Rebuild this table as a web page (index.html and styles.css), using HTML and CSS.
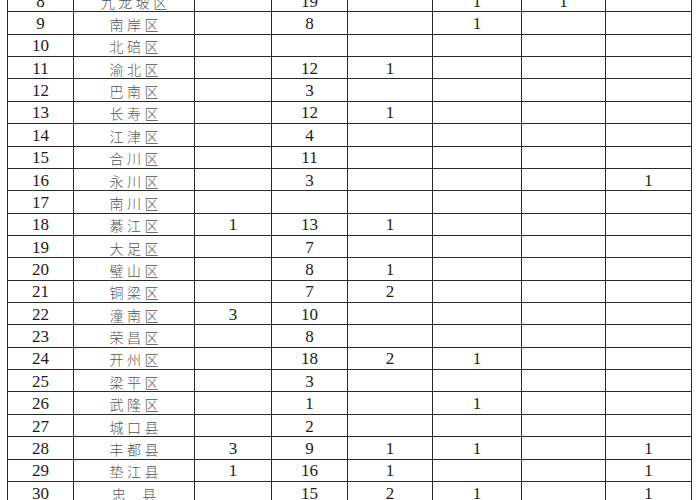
FILE: index.html
```html
<!DOCTYPE html>
<html lang="zh">
<head>
<meta charset="utf-8">
<link rel="stylesheet" href="styles.css">
</head>
<body>
<div class="page">
<table class="stats">
<colgroup>
<col class="c1"><col class="c2"><col class="c3"><col class="c4"><col class="c5"><col class="c6"><col class="c7"><col class="c8">
</colgroup>
<tbody>
<tr><td>8</td><td class="name">九龙坡区</td><td></td><td>19</td><td></td><td>1</td><td>1</td><td></td></tr>
<tr><td>9</td><td class="name">南岸区</td><td></td><td>8</td><td></td><td>1</td><td></td><td></td></tr>
<tr><td>10</td><td class="name">北碚区</td><td></td><td></td><td></td><td></td><td></td><td></td></tr>
<tr><td>11</td><td class="name">渝北区</td><td></td><td>12</td><td>1</td><td></td><td></td><td></td></tr>
<tr><td>12</td><td class="name">巴南区</td><td></td><td>3</td><td></td><td></td><td></td><td></td></tr>
<tr><td>13</td><td class="name">长寿区</td><td></td><td>12</td><td>1</td><td></td><td></td><td></td></tr>
<tr><td>14</td><td class="name">江津区</td><td></td><td>4</td><td></td><td></td><td></td><td></td></tr>
<tr><td>15</td><td class="name">合川区</td><td></td><td>11</td><td></td><td></td><td></td><td></td></tr>
<tr><td>16</td><td class="name">永川区</td><td></td><td>3</td><td></td><td></td><td></td><td>1</td></tr>
<tr><td>17</td><td class="name">南川区</td><td></td><td></td><td></td><td></td><td></td><td></td></tr>
<tr><td>18</td><td class="name">綦江区</td><td>1</td><td>13</td><td>1</td><td></td><td></td><td></td></tr>
<tr><td>19</td><td class="name">大足区</td><td></td><td>7</td><td></td><td></td><td></td><td></td></tr>
<tr><td>20</td><td class="name">璧山区</td><td></td><td>8</td><td>1</td><td></td><td></td><td></td></tr>
<tr><td>21</td><td class="name">铜梁区</td><td></td><td>7</td><td>2</td><td></td><td></td><td></td></tr>
<tr><td>22</td><td class="name">潼南区</td><td>3</td><td>10</td><td></td><td></td><td></td><td></td></tr>
<tr><td>23</td><td class="name">荣昌区</td><td></td><td>8</td><td></td><td></td><td></td><td></td></tr>
<tr><td>24</td><td class="name">开州区</td><td></td><td>18</td><td>2</td><td>1</td><td></td><td></td></tr>
<tr><td>25</td><td class="name">梁平区</td><td></td><td>3</td><td></td><td></td><td></td><td></td></tr>
<tr><td>26</td><td class="name">武隆区</td><td></td><td>1</td><td></td><td>1</td><td></td><td></td></tr>
<tr><td>27</td><td class="name">城口县</td><td></td><td>2</td><td></td><td></td><td></td><td></td></tr>
<tr><td>28</td><td class="name">丰都县</td><td>3</td><td>9</td><td>1</td><td>1</td><td></td><td>1</td></tr>
<tr><td>29</td><td class="name">垫江县</td><td>1</td><td>16</td><td>1</td><td></td><td></td><td>1</td></tr>
<tr><td>30</td><td class="name">忠<span class="gap"></span>县</td><td></td><td>15</td><td>2</td><td>1</td><td></td><td>1</td></tr>
</tbody>
</table>
</div>
</body>
</html>
```
FILE: styles.css
```css
html, body {
  margin: 0;
  padding: 0;
  background: #ffffff;
  overflow: hidden;
}

.page {
  padding-left: 7px;
  height: 500px;
  overflow: hidden;
}

.stats {
  border-collapse: collapse;
  table-layout: fixed;
  width: 684px;
  margin-top: -11px;
  font-family: "Liberation Serif", "Times New Roman", serif;
  font-size: 17px;
  color: #1c1c1c;
}

.c1 { width: 66px; }
.c2 { width: 121px; }
.c3 { width: 77px; }
.c4 { width: 76px; }
.c5 { width: 85px; }
.c6 { width: 89px; }
.c7 { width: 84px; }
.c8 { width: 86px; }

.stats tr {
  height: 22.36px;
}

.stats td {
  border: 1px solid #2a2a2a;
  padding: 2px 0 0 0;
  text-align: center;
  vertical-align: middle;
  line-height: 18px;
  white-space: nowrap;
}

.stats td.name {
  font-family: "Noto Sans CJK SC", "Noto Sans", sans-serif;
  font-size: 14px;
  font-weight: 300;
  color: #555555;
  letter-spacing: 3.5px;
  text-indent: 3.5px;
}

.gap {
  display: inline-block;
  width: 13px;
}
```
